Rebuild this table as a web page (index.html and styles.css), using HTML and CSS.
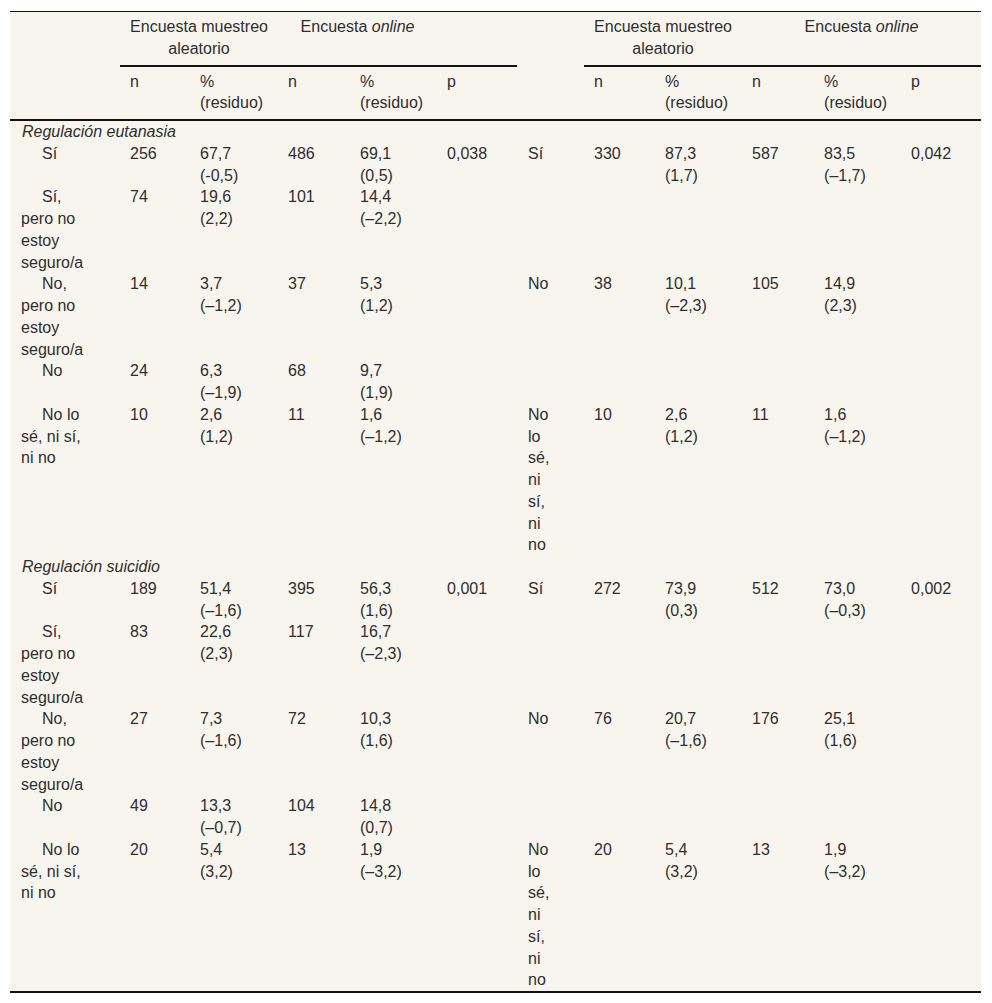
FILE: index.html
```html
<!DOCTYPE html>
<html lang="es">
<head>
<meta charset="utf-8">
<title>Tabla</title>
<link rel="stylesheet" href="styles.css">
</head>
<body>
<div class="wrap">
<table class="tbl">
<colgroup>
<col class="w1"><col class="w2"><col class="w3"><col class="w4"><col class="w5"><col class="w6">
<col class="w7"><col class="w8"><col class="w9"><col class="w10"><col class="w11"><col class="w12">
</colgroup>
<thead>
<tr class="h1">
<th rowspan="2" class="lab"></th>
<th colspan="2" class="grp">Encuesta muestreo aleatorio</th>
<th colspan="2" class="grp">Encuesta <i>online</i></th>
<th class="grp"></th>
<th rowspan="2" class="lab2"></th>
<th colspan="2" class="grp">Encuesta muestreo aleatorio</th>
<th colspan="3" class="grp">Encuesta <i>online</i></th>
</tr>
<tr class="h2">
<th>n</th><th>%<br>(residuo)</th><th>n</th><th>%<br>(residuo)</th><th>p</th>
<th>n</th><th>%<br>(residuo)</th><th>n</th><th>%<br>(residuo)</th><th>p</th>
</tr>
</thead>
<tbody>
<tr><td colspan="12" class="sec">Regulación eutanasia</td></tr>
<tr><td class="lab">Sí</td><td>256</td><td>67,7<br>(-0,5)</td><td>486</td><td>69,1<br>(0,5)</td><td>0,038</td><td class="lab2">Sí</td><td>330</td><td>87,3<br>(1,7)</td><td>587</td><td>83,5<br>(–1,7)</td><td>0,042</td></tr>
<tr><td class="lab">Sí, pero no estoy seguro/a</td><td>74</td><td>19,6<br>(2,2)</td><td>101</td><td>14,4<br>(–2,2)</td><td></td><td class="lab2"></td><td></td><td></td><td></td><td></td><td></td></tr>
<tr><td class="lab">No, pero no estoy seguro/a</td><td>14</td><td>3,7<br>(–1,2)</td><td>37</td><td>5,3<br>(1,2)</td><td></td><td class="lab2">No</td><td>38</td><td>10,1<br>(–2,3)</td><td>105</td><td>14,9<br>(2,3)</td><td></td></tr>
<tr><td class="lab">No</td><td>24</td><td>6,3<br>(–1,9)</td><td>68</td><td>9,7<br>(1,9)</td><td></td><td class="lab2"></td><td></td><td></td><td></td><td></td><td></td></tr>
<tr><td class="lab">No lo sé, ni sí, ni no</td><td>10</td><td>2,6<br>(1,2)</td><td>11</td><td>1,6<br>(–1,2)</td><td></td><td class="lab2">No lo sé, ni sí, ni no</td><td>10</td><td>2,6<br>(1,2)</td><td>11</td><td>1,6<br>(–1,2)</td><td></td></tr>
<tr><td colspan="12" class="sec">Regulación suicidio</td></tr>
<tr><td class="lab">Sí</td><td>189</td><td>51,4<br>(–1,6)</td><td>395</td><td>56,3<br>(1,6)</td><td>0,001</td><td class="lab2">Sí</td><td>272</td><td>73,9<br>(0,3)</td><td>512</td><td>73,0<br>(–0,3)</td><td>0,002</td></tr>
<tr><td class="lab">Sí, pero no estoy seguro/a</td><td>83</td><td>22,6<br>(2,3)</td><td>117</td><td>16,7<br>(–2,3)</td><td></td><td class="lab2"></td><td></td><td></td><td></td><td></td><td></td></tr>
<tr><td class="lab">No, pero no estoy seguro/a</td><td>27</td><td>7,3<br>(–1,6)</td><td>72</td><td>10,3<br>(1,6)</td><td></td><td class="lab2">No</td><td>76</td><td>20,7<br>(–1,6)</td><td>176</td><td>25,1<br>(1,6)</td><td></td></tr>
<tr><td class="lab">No</td><td>49</td><td>13,3<br>(–0,7)</td><td>104</td><td>14,8<br>(0,7)</td><td></td><td class="lab2"></td><td></td><td></td><td></td><td></td><td></td></tr>
<tr><td class="lab">No lo sé, ni sí, ni no</td><td>20</td><td>5,4<br>(3,2)</td><td>13</td><td>1,9<br>(–3,2)</td><td></td><td class="lab2">No lo sé, ni sí, ni no</td><td>20</td><td>5,4<br>(3,2)</td><td>13</td><td>1,9<br>(–3,2)</td><td></td></tr>
</tbody>
</table>
</div>
</body>
</html>
```

FILE: styles.css
```css
html, body {
  margin: 0;
  padding: 0;
  background: #ffffff;
}
.wrap {
  padding: 11px 11px 0 10px;
}
.tbl {
  width: 971px;
  table-layout: fixed;
  border-collapse: collapse;
  border-spacing: 0;
  background: #f8f5ef;
  color: #2e2e2e;
  font-family: "Liberation Sans", Arial, sans-serif;
  font-size: 16px;
  line-height: 21.75px;
  border-top: 1px solid #111111;
  border-bottom: 2px solid #111111;
}
.w1 { width: 110px; }
.w2 { width: 70px; }
.w3 { width: 88px; }
.w4 { width: 72px; }
.w5 { width: 87px; }
.w6 { width: 80px; }
.w7 { width: 67px; }
.w8 { width: 71px; }
.w9 { width: 87px; }
.w10 { width: 72px; }
.w11 { width: 87px; }
.w12 { width: 80px; }
.tbl th, .tbl td {
  padding: 0 0 0 10px;
  text-align: left;
  vertical-align: top;
  font-weight: normal;
}
.tbl thead th {
  padding-top: 4px;
  padding-bottom: 5px;
}
.tbl .h1 .grp {
  text-align: center;
  padding-left: 0;
  padding-right: 0;
  border-bottom: 2px solid #111111;
}
.tbl .h1 .lab,
.tbl .h1 .lab2,
.tbl .h2 th {
  border-bottom: 2px solid #111111;
}
.tbl .sec {
  font-style: italic;
  padding-left: 12px;
}
.tbl td.lab {
  padding-left: 11px;
  padding-right: 30px;
  text-indent: 21px;
}
.tbl td.lab2 {
  padding-left: 11px;
  padding-right: 28px;
}
```
